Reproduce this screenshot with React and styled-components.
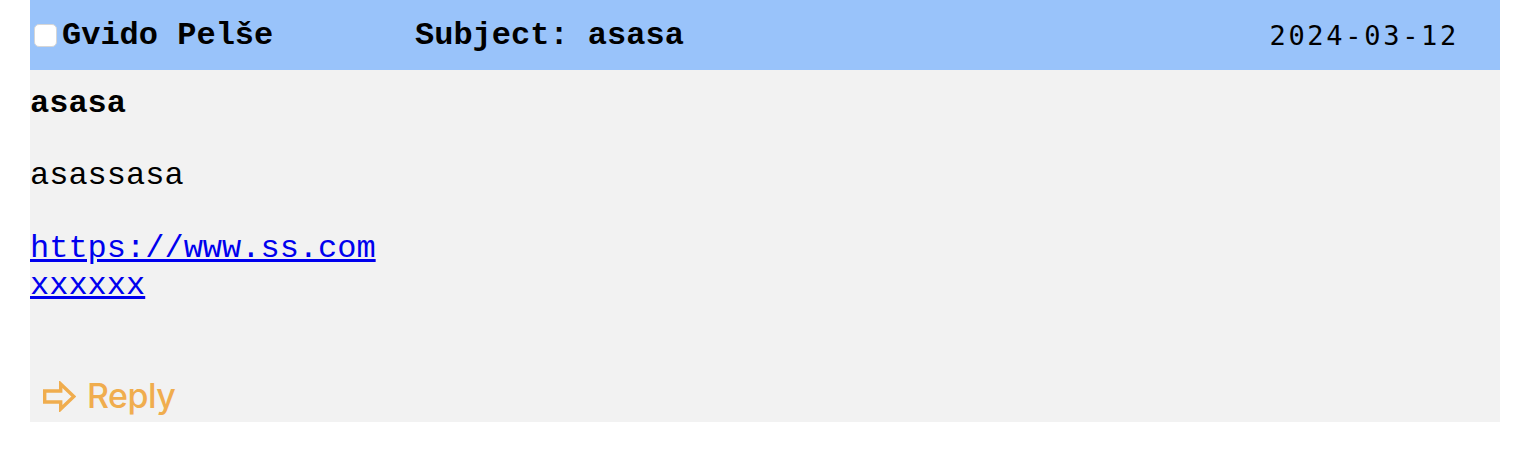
import styled, { createGlobalStyle } from "styled-components";

const GlobalStyle = createGlobalStyle`
  body {
    margin: 0;
    background: #fff;
  }
`;

const MessageCard = styled.div`
  width: 1470px;
  margin-left: 30px;
  background-color: #f2f2f2;
  font-family: "Courier New", "Nimbus Mono PS", "FreeMono", "Liberation Mono", monospace;
  font-size: 32px;
  color: #000;
`;

const MessageHeader = styled.div`
  box-sizing: border-box;
  display: flex;
  align-items: center;
  height: 70px;
  padding: 1px 41px 0 4px;
  background-color: #99c3fa;
  line-height: 36px;
`;

const SelectBox = styled.input.attrs({ type: "checkbox" })`
  appearance: none;
  width: 23px;
  height: 23px;
  margin: 0 5px 0 0;
  border-radius: 5px;
  border: 1px solid #d6d6d6;
  background: #fff;
  flex-shrink: 0;
`;

const HeaderField = styled.span`
  font-weight: bold;
  width: ${({ $width }) => $width || "auto"};
  flex: ${({ $grow }) => ($grow ? 1 : "none")};
  white-space: nowrap;
`;

const HeaderDate = styled.span`
  font-family: "DejaVu Sans Mono", monospace;
  font-size: 27px;
  letter-spacing: 2.7px;
`;

const MessageBody = styled.div`
  padding: 16px 0 6px 0;
`;

const Paragraph = styled.p`
  margin: 0 0 36px 0;
  line-height: 36px;
  font-weight: ${({ $bold }) => ($bold ? "bold" : "normal")};
`;

const LinkList = styled.div`
  display: flex;
  flex-direction: column;
  align-items: flex-start;
  line-height: 37px;
  margin-bottom: 72px;
`;

const BodyLink = styled.a`
  color: #0000ee;
  text-decoration: underline;
`;

const ReplyButton = styled.button`
  display: flex;
  align-items: center;
  gap: 11px;
  margin-left: 13px;
  padding: 0;
  border: none;
  background: transparent;
  color: #f0ad4e;
  font-family: Inter, "Liberation Sans", Arial, sans-serif;
  font-weight: 500;
  font-size: 34px;
  letter-spacing: -0.5px;
  line-height: 40px;
  cursor: pointer;
`;

function ReplyArrow() {
  return (
    <svg width="33" height="31" viewBox="0 0 33 31">
      <polygon
        points="1.7,10 17.7,10 17.7,3 30.8,15.5 17.7,28 17.7,21 1.7,21"
        fill="none"
        stroke="#f0ad4e"
        strokeWidth="3.4"
      />
    </svg>
  );
}

export default function App() {
  return (
    <>
      <GlobalStyle />
      <MessageCard>
        <MessageHeader>
          <SelectBox />
          <HeaderField $width="353px">Gvido Pelše</HeaderField>
          <HeaderField $grow>Subject: asasa</HeaderField>
          <HeaderDate>2024-03-12</HeaderDate>
        </MessageHeader>

        <MessageBody>
          <Paragraph $bold>asasa</Paragraph>
          <Paragraph>asassasa</Paragraph>
          <LinkList>
            <BodyLink href="#">https://www.ss.com</BodyLink>
            <BodyLink href="#">xxxxxx</BodyLink>
          </LinkList>
          <ReplyButton>
            <ReplyArrow />
            Reply
          </ReplyButton>
        </MessageBody>
      </MessageCard>
    </>
  );
}
